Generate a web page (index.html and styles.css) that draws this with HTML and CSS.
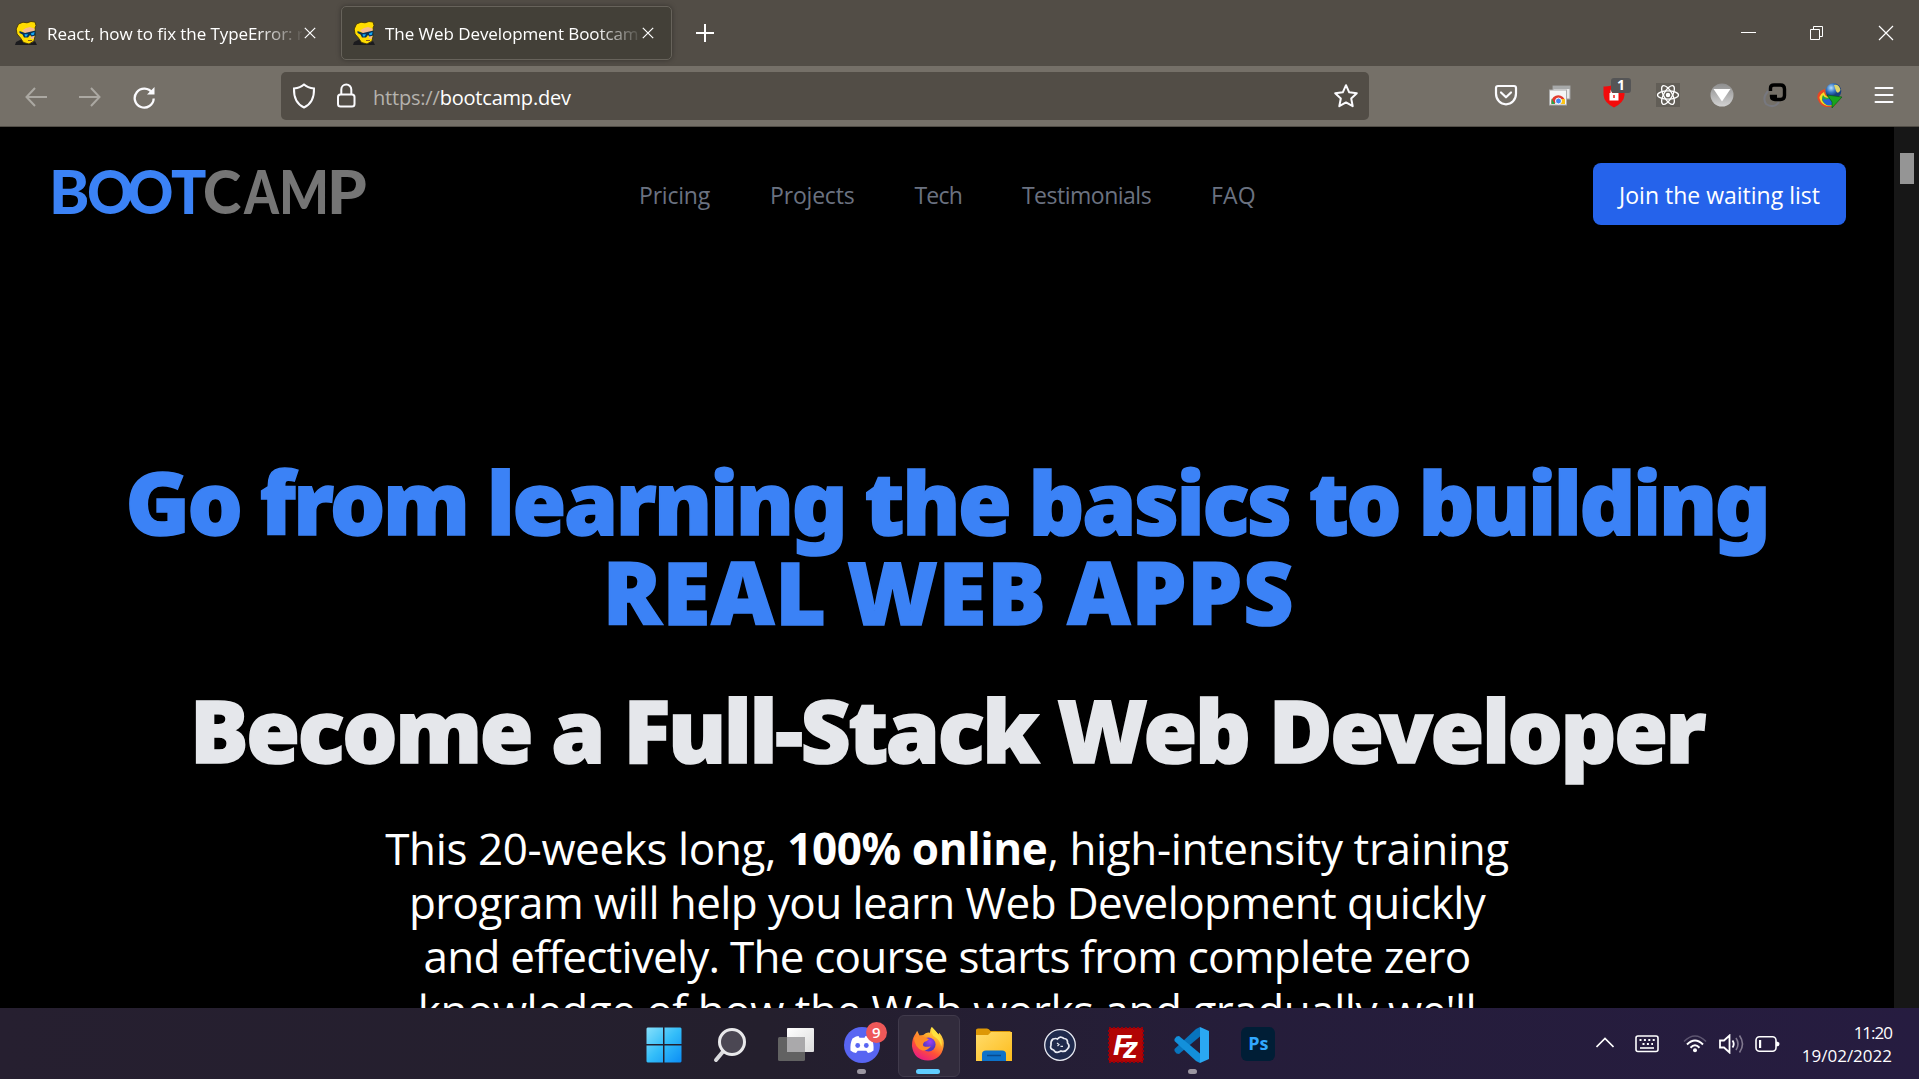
FILE: index.html
```html
<!DOCTYPE html>
<html lang="en">
<head>
<meta charset="utf-8">
<title>The Web Development Bootcamp</title>
<link rel="stylesheet" href="styles.css">
</head>
<body>
<svg class="defs" width="0" height="0" aria-hidden="true">
  <defs>
    <symbol id="avatar" viewBox="0 0 22 24">
      <path d="M0 24 1 21 6 18.500 9 21 17 22 20 20 22 24Z" fill="#1b1b1e"/>
      <path d="M2 13 1.200 8 3.500 3 8 1.200 12 1.800 16 .5 20 1 21 4.500 20 7 20.500 13 19 20 14 23 8.500 21.500 5.500 17Z" fill="#ffdc00" stroke="#42350a" stroke-width=".9"/>
      <path d="M7 9.500 11 7 15 6 19.500 7.500 19.500 10 10 12.500Z" fill="#f5b98f"/>
      <path d="M16 14 19.500 14.500 18.500 18 15.500 17.500Z" fill="#f5b98f"/>
      <path d="M4.500 10 10 12 20.500 9.500 20.500 14.500 16.500 15.500 15 14 13 16.500 9 16.500 7.500 13.500 4.500 12Z" fill="#06315a"/>
      <path d="M9.500 13.200 13 13.300 11.700 15.500 10 15.500ZM16 12.300 19.500 11 19 13.700 16.500 14.300Z" fill="#13a9f5"/>
      <path d="M13 19.500H17" stroke="#7a4b22" stroke-width=".9"/>
    </symbol>
    <symbol id="cross" viewBox="0 0 12 12"><path d="M.8.8 11.200 11.200M11.200.8.8 11.200" stroke="currentColor" stroke-width="1.200" fill="none"/></symbol>
    <linearGradient id="win" x1="0" y1="0" x2="1" y2="1"><stop offset="0" stop-color="#86e0fb"/><stop offset=".5" stop-color="#33bdf9"/><stop offset="1" stop-color="#0b8df5"/></linearGradient>
    <linearGradient id="glass" x1="0" y1="0" x2="1" y2="1"><stop offset="0" stop-color="#fff"/><stop offset="1" stop-color="#dcdcdc"/></linearGradient>
    <linearGradient id="fold" x1="0" y1="0" x2="1" y2="1"><stop offset="0" stop-color="#ffdc6b"/><stop offset="1" stop-color="#fdbc1c"/></linearGradient>
    <linearGradient id="flame" x1=".8" y1="0" x2=".25" y2="1"><stop offset="0" stop-color="#fff44f"/><stop offset=".35" stop-color="#ffa62b"/><stop offset=".65" stop-color="#ff5037"/><stop offset="1" stop-color="#e6178a"/></linearGradient>
    <radialGradient id="globe" cx=".6" cy=".3"><stop offset="0" stop-color="#a03ff5"/><stop offset="1" stop-color="#5136c4"/></radialGradient>
    <radialGradient id="ball" cx=".35" cy=".3"><stop offset="0" stop-color="#b9e2ff"/><stop offset=".6" stop-color="#3274c4"/><stop offset="1" stop-color="#17407e"/></radialGradient>
    <linearGradient id="chrome" x1="0" y1="0" x2="0" y2="1"><stop offset="0" stop-color="#8e8e8e"/><stop offset="1" stop-color="#d2d2d2"/></linearGradient>
  </defs>
</svg>

<header class="titlebar">
  <div class="tabs">
    <div class="tab">
      <svg class="favicon"><use href="#avatar"/></svg>
      <span class="tab-title">React, how to fix the TypeError: n</span>
      <svg class="tab-close"><use href="#cross"/></svg>
    </div>
    <div class="tab active">
      <svg class="favicon"><use href="#avatar"/></svg>
      <span class="tab-title">The Web Development Bootcamp</span>
      <svg class="tab-close"><use href="#cross"/></svg>
    </div>
    <svg class="new-tab" viewBox="0 0 18 18"><path d="M9 0V18M0 9H18" stroke="#fff" stroke-width="2"/></svg>
  </div>
  <div class="window-buttons">
    <svg width="16" height="16" viewBox="0 0 16 16"><path d="M1 7.500H16" stroke="#fff"/></svg>
    <svg width="16" height="16" viewBox="0 0 16 16" fill="none" stroke="#fff"><path d="M1.500 4.500H10.500V14.500H1.500ZM4.500 4.500V1.500H13.500V11.500H10.500"/></svg>
    <svg width="16" height="16" viewBox="0 0 16 16"><path d="M1 1 15 15M15 1 1 15" stroke="#fff" stroke-width="1.200"/></svg>
  </div>
</header>

<div class="toolbar">
  <div class="nav-buttons">
    <svg class="dim" width="22" height="22" viewBox="0 0 22 22"><path d="M22 11H1.500M10 2 1.500 11 10 20"/></svg>
    <svg class="dim" width="22" height="22" viewBox="0 0 22 22"><path d="M0 11H20.500M12 2 20.500 11 12 20"/></svg>
    <svg width="24" height="24" viewBox="0 0 24 24"><path d="M19.200 8A9.500 9.500 0 1 0 20.700 13.500" stroke-width="2.300"/><path d="M21.500 2V9.500H14Z" fill="#fbfbfe" stroke="none"/></svg>
  </div>
  <div class="urlbar">
    <svg width="24" height="26" viewBox="0 0 24 26"><path d="M12 1.500C14.500 3.800 18 5 22 5.500 22.300 14 19.500 21 12 24.500 4.500 21 1.700 14 2 5.500 6 5 9.500 3.800 12 1.500Z"/></svg>
    <svg width="20" height="26" viewBox="0 0 20 26"><rect x="1" y="11.500" width="16.500" height="12" rx="2.500"/><path d="M4.300 11V6.500A5 5 0 0 1 14.300 6.500V11"/></svg>
    <span class="url"><span class="scheme">https://</span>bootcamp.dev</span>
    <svg width="26" height="26" viewBox="0 0 26 26"><path d="M13 2.200 16.200 9.300 23.800 10.200 18.200 15.500 19.700 23.200 13 19.400 6.300 23.200 7.800 15.500 2.200 10.200 9.800 9.300Z" stroke-linejoin="round"/></svg>
  </div>
  <div class="extensions">
    <svg viewBox="0 0 28 28" fill="none" stroke="#fbfbfe" stroke-width="2.200" stroke-linecap="round" stroke-linejoin="round"><path d="M6 5H22A2 2 0 0 1 24 7V12.500C24 19 19.500 23.300 14 23.300S4 19 4 12.500V7A2 2 0 0 1 6 5ZM9 11.500 14 16.300 19 11.500"/></svg>
    <svg viewBox="0 0 28 28"><rect x="7" y="5" width="17" height="13" fill="#e8e8e8" stroke="#9f9f9f"/><path d="M7 5H24V8H7Z" fill="#a7a9a9"/><rect x="3.500" y="9" width="17" height="15" fill="#f5f5f5" stroke="#aaa"/><path d="M5.500 23A7 7 0 0 1 18.500 18H12.500L8.500 23Z" fill="#e23b2e"/><path d="M5.500 17.500 9 23H5.500Z" fill="#27a84a"/><path d="M15 18H19V23H14Z" fill="#fbc417"/><circle cx="12.500" cy="20" r="3" fill="#4485f4" stroke="#fff"/></svg>
    <span class="ext-badge">
      <svg viewBox="0 0 28 28"><path d="M14 3.500Q19 6 24.500 5.500V14Q24 21.500 14 26.500 4 21.500 3.500 14V5.500Q9 6 14 3.500Z" fill="#f30b0b"/><rect x="9.500" y="12" width="9" height="7.500" fill="#fff"/><path d="M11.300 12V10.500A2.700 2.700 0 0 1 16.700 10.500V12" fill="none" stroke="#fff" stroke-width="1.600"/><path d="M14 14V17" stroke="#f30b0b" stroke-width="1.400"/></svg>
      <b>1</b>
    </span>
    <svg viewBox="0 0 28 28" fill="none" stroke="#fff" stroke-width="1.300"><path d="M2 2H26V26H2Z" fill="#625e57" stroke="none"/><ellipse cx="14" cy="14" rx="10.500" ry="4.200"/><ellipse cx="14" cy="14" rx="10.500" ry="4.200" transform="rotate(60 14 14)"/><ellipse cx="14" cy="14" rx="10.500" ry="4.200" transform="rotate(120 14 14)"/><circle cx="14" cy="14" r="1.600" fill="#fff"/></svg>
    <svg viewBox="0 0 28 28"><circle cx="14" cy="14" r="11.500" fill="url(#chrome)"/><path d="M5.500 8H22.500L14 20.500Z" fill="#fff"/></svg>
    <svg viewBox="0 0 28 28" fill="none"><path d="M6 10Q0 17 4 23 12 28 17 21" stroke="#77787f" stroke-width="2"/><path d="M8.500 10V7Q8.500 4 12 4H18.500Q22.500 4 22.500 8V14.500Q22.500 18.500 18.500 18.500H13Q9.500 18.500 9.500 15.500H15" stroke="#000" stroke-width="3.400"/></svg>
    <svg viewBox="0 0 28 28"><path d="M9 8Q-1 11 2 19 5 27 14 26L20 24 15 15Q9 17 9 8Z" fill="#e84724"/><path d="M8 11Q1 15 5 21 10 27 18 24L15 16Q9 17 8 11Z" fill="#f5dc26"/><path d="M7 14Q4 19 9 23 14 26 19 23L14 16Q9 18 7 14Z" fill="#25a446"/><path d="M7 17Q6 21 11 24 15 25 19 22L14 17Q9 20 7 17Z" fill="#2360d5"/><circle cx="17.500" cy="10" r="7.800" fill="url(#ball)"/><path d="M18 4Q23 3 24.500 9 22 14 20 10Z" fill="#ded56a"/><path d="M11 14 26 16 16 27 16 21Z" fill="#18a51d" stroke="#0a5010" stroke-width=".6"/></svg>
    <svg viewBox="0 0 28 28" stroke="#fbfbfe" stroke-width="2" stroke-linecap="round"><path d="M5.500 7H22.500M5.500 14H22.500M5.500 21H22.500"/></svg>
  </div>
</div>

<main class="viewport">
  <div class="page">
    <div class="site-header">
      <svg class="logo" width="320" height="56" viewBox="0 0 320 56">
        <g class="logo-blue"><text x="0" y="50" textLength="40.400" lengthAdjust="spacingAndGlyphs">B</text><text x="38" y="50" textLength="46.500" lengthAdjust="spacingAndGlyphs">O</text><text x="78" y="50" textLength="46.500" lengthAdjust="spacingAndGlyphs">O</text><text x="122" y="50" textLength="35.400" lengthAdjust="spacingAndGlyphs">T</text></g>
        <g class="logo-gray"><text x="154" y="50" textLength="38.200" lengthAdjust="spacingAndGlyphs">C</text><text x="195" y="50" textLength="35" lengthAdjust="spacingAndGlyphs">A</text><text x="230" y="50" textLength="50" lengthAdjust="spacingAndGlyphs">M</text><text x="278" y="50" textLength="39.800" lengthAdjust="spacingAndGlyphs">P</text></g>
      </svg>
      <nav class="menu">
        <a>Pricing</a><a class="projects">Projects</a><a class="tech">Tech</a><a class="testimonials">Testimonials</a><a class="faq">FAQ</a>
      </nav>
      <a class="cta">Join the waiting list</a>
    </div>
    <section class="hero">
      <h1><span class="l1">Go from learning the basics to building</span><span class="l2">REAL WEB APPS</span></h1>
      <h2>Become a Full-Stack Web Developer</h2>
      <p>
        <span class="p1">This 20-weeks long, <strong>100% online</strong>, high-intensity training</span>
        <span class="p2">program will help you learn Web Development quickly</span>
        <span class="p3">and effectively. The course starts from complete zero</span>
        <span class="p4">knowledge of how the Web works and gradually we'll</span>
      </p>
    </section>
  </div>
  <div class="scrollbar"><div class="thumb"></div></div>
</main>

<footer class="taskbar">
  <div class="apps">
    <div class="app"><svg viewBox="0 0 36 36"><path d="M1.500.5H17V17H.5V1.500ZM18.500.5H34.500L35.500 1.500V17H18.500ZM.5 18.500H17V35.500H1.500L.5 34.500ZM18.500 18.500H35.500V34.500L34.500 35.500H18.500Z" fill="url(#win)"/></svg></div>
    <div class="app"><svg viewBox="0 0 36 36"><path d="M11.500 24 4 33" stroke="#d9d9dc" stroke-width="4" stroke-linecap="round"/><circle cx="20" cy="15" r="12.500" fill="#4b4753" stroke="#e9e9eb" stroke-width="3"/></svg></div>
    <div class="app"><svg viewBox="0 0 36 36"><rect y="10" width="27" height="24" rx="1.500" fill="#626262"/><rect x="9" y="1" width="27" height="24" rx="1" fill="url(#glass)"/><path d="M9 10H27V25H9Z" fill="#aaa9ab"/></svg></div>
    <div class="app"><svg viewBox="0 0 36 36"><circle cx="18" cy="18" r="18" fill="#5865f2"/><path d="M12 9.500 14.500 9 15.500 10.700H20.500L21.500 9 24 9.500 27.500 11.500Q30 16 29.500 23.500 27 25.500 24 26L22.300 23.800H13.700L12 26Q9 25.500 6.500 23.500 6 16 8.500 11.500Z" fill="#fff"/><circle cx="13.700" cy="18.500" r="2.400" fill="#5865f2"/><circle cx="22.300" cy="18.500" r="2.400" fill="#5865f2"/></svg><span class="count">9</span><i class="dot"></i></div>
    <div class="app current"><svg viewBox="0 0 36 36"><path d="M22 0Q26 4 29 8L30 6Q36 13 34.500 21 32 35 18 35.500 3 35 1 20 1 12 5 7L6.500 4 9 9 13 8.500Q16 5 20 6 20 2 22 0Z" fill="url(#flame)"/><circle cx="18.500" cy="18.500" r="7.500" fill="url(#globe)"/><path d="M3 11Q9 8 13 10L19 13Q17 15 14 16 12 18 13 20 17 22 21 20 18 25 12 25 4 22 3 11Z" fill="#ff8a29"/><path d="M22 0Q26 4 29 8 34 14 32 21 31 14 26 11 20 8 22 0Z" fill="#ffe23f"/></svg><i class="dot wide"></i></div>
    <div class="app"><svg viewBox="0 0 36 36"><path d="M0 3Q0 1.500 2 1.500H11Q13 1.500 14.500 4H34L36 6V34H0Z" fill="#dd9806"/><path d="M0 8H12L15 5H36V34H0Z" fill="url(#fold)"/><path d="M6 34V27Q6 23.500 10 23.500H26Q30 23.500 30 27V34Z" fill="#0d72c9"/><path d="M11 28.500H25" stroke="#084a8c" stroke-width="1.500"/></svg></div>
    <div class="app"><svg viewBox="0 0 36 36" fill="none" stroke="#e8eaf2"><circle cx="18" cy="18" r="15.300" fill="#1f2a4d" stroke-width="1.300"/><path d="M11 12Q14 11 15.500 12 18 8.500 22 11.500 26 12 25.500 16 28.500 19 25.500 22 23 25.500 19 24 14 27 11.500 23 7.500 22 9 18 8.500 14 11 12Z" stroke-width="1.700"/><path d="M15 16 17 17.500 15.500 19M18.500 19.300H21" stroke-width="1.200"/></svg></div>
    <div class="app"><svg viewBox="0 0 36 36"><rect x="1" y="1" width="34" height="34" fill="#b10404" stroke="#98000b" stroke-width="2" stroke-dasharray="2 2"/><text class="fz" x="5" y="28" font-size="30">F</text><text class="fz" x="15" y="30.500" font-size="30">z</text></svg></div>
    <div class="app"><svg viewBox="0 0 36 36"><path d="M26 9.500 5 27 2.500 26.500.5 24V22L22 2 26 0Z" fill="#0874bd"/><path d="M26 26.500 5 9 2.500 9.500.5 12V14L22 34 26 36Z" fill="#1390db"/><path d="M26 0 35 4V32L26 36Z" fill="#2aa8f2"/></svg><i class="dot"></i></div>
    <div class="app"><span class="ps">Ps</span></div>
  </div>
  <div class="tray">
    <svg class="chev" width="18" height="12" viewBox="0 0 18 12"><path d="M.5 10 9 1.500 17.500 10"/></svg>
    <svg class="kbd" width="24" height="18" viewBox="0 0 24 18"><rect x="1" y="1" width="22" height="15.500" rx="2"/><path d="M4.500 5H20M7.500 9H18" stroke-dasharray="2 2.400" stroke-width="1.800"/><path d="M5 13H19"/></svg>
    <svg class="wifi" width="24" height="20" viewBox="0 0 24 20"><path d="M1 7.500Q12-3.500 23 7.500" stroke="#5d5570"/><path d="M4 10.500Q12 2.500 20 10.500M7.500 13.700Q12 9 16.500 13.700" stroke-width="2"/><circle cx="12" cy="16.300" r="2" fill="#fff" stroke="none"/></svg>
    <svg class="vol" width="25" height="20" viewBox="0 0 25 20"><path d="M1 6.500H5L10.500 1.500V18.500L5 13.500H1ZM13.500 6.500Q16 10 13.500 13.500" stroke-width="1.800"/><path d="M17 4Q21 10 17 16M20.500 1.500Q26.500 10 20.500 18.500" stroke="#81798f"/></svg>
    <svg class="bat" width="25" height="18" viewBox="0 0 25 18"><rect x="1" y="1.800" width="20" height="14.400" rx="3.500"/><path d="M4 5H6.200V13H4Z" fill="#fff" stroke="none"/><path d="M21 6.500Q24.500 6.500 24.500 9T21 11.500Z" fill="#fff" stroke="none"/></svg>
    <div class="clock"><span class="time">11:20</span><span>19/02/2022</span></div>
  </div>
</footer>
</body>
</html>
```
FILE: styles.css
```css
* { box-sizing: border-box; }
body {
  margin: 0;
  width: 1919px;
  height: 1079px;
  overflow: hidden;
  display: flex;
  flex-direction: column;
  background: #000;
  font-family: "Open Sans", "Noto Sans", sans-serif;
  color: #fff;
}
svg { display: block; flex: none; }
.defs { position: absolute; }

/* Browser chrome */
.titlebar {
  height: 66px;
  flex: none;
  display: flex;
  justify-content: space-between;
  background: #524d46;
}
.tabs { display: flex; align-items: center; padding-left: 3px; }
.tab {
  width: 331px;
  height: 54px;
  margin-right: 7px;
  padding-left: 11px;
  display: flex;
  align-items: center;
  border: 1px solid transparent;
  border-radius: 5px;
}
.tab.active {
  background: #434038;
  border-color: #67635b;
  box-shadow: 0 0 5px rgba(0, 0, 0, .35);
}
.favicon { width: 22px; height: 24px; }
.tab-title {
  width: 255px;
  margin-left: 10px;
  overflow: hidden;
  white-space: nowrap;
  font-size: 17px;
  letter-spacing: -.08px;
  -webkit-mask-image: linear-gradient(to right, #000 210px, transparent 258px);
  mask-image: linear-gradient(to right, #000 210px, transparent 258px);
}
.tab-close { width: 12px; height: 12px; margin-left: 2px; color: #fff; }
.new-tab { width: 18px; height: 18px; margin-left: 17px; }
.window-buttons { display: flex; align-items: center; gap: 53px; padding-right: 25px; color: #fff; }

.toolbar {
  height: 61px;
  flex: none;
  display: flex;
  align-items: center;
  background: #757068;
  border-bottom: 1px solid #514d46;
}
.nav-buttons { width: 281px; padding-left: 25px; display: flex; align-items: center; gap: 32px; padding-top: 2px; }
.nav-buttons svg, .urlbar svg { fill: none; stroke: #fbfbfe; stroke-width: 2; }
.nav-buttons .dim { stroke: #aba8a2; }
.urlbar {
  width: 1088px;
  height: 48px;
  padding: 0 10px 0 11px;
  display: flex;
  align-items: center;
  background: #524d46;
  border-radius: 5px;
}
.urlbar svg:nth-child(2) { margin-left: 21px; }
.url { flex: 1; margin-left: 16px; font-size: 20px; letter-spacing: -.2px; line-height: 30px; padding-top: 3px; }
.scheme { color: #b5b2ad; }
.extensions { margin: 0 0 2px 123px; display: flex; gap: 26px; }
.extensions svg { width: 28px; height: 28px; }
.ext-badge { position: relative; }
.ext-badge b {
  position: absolute;
  left: 11px;
  top: -3px;
  width: 20px;
  height: 15px;
  border-radius: 3px;
  background: #555556;
  font-size: 14px;
  line-height: 14px;
  text-align: center;
}

/* Site */
.viewport { height: 881px; flex: none; display: flex; overflow: hidden; }
.page { width: 1894px; height: 881px; overflow: hidden; }
.scrollbar { width: 25px; padding: 26px 5px 0 6px; background: #171717; }
.thumb { height: 31px; background: #959595; }
.site-header { height: 134px; padding: 0 48px 0 49px; display: flex; align-items: center; }
.logo { overflow: visible; margin-bottom: 5px; font-family: Lato, sans-serif; font-weight: 900; font-size: 61px; }
.logo-blue { fill: #3b82f6; }
.logo-gray { fill: #757575; }
.menu {
  margin: 1px 0 0 270px;
  display: flex;
  gap: 60px;
  color: #6b7280;
  font-size: 23px;
  line-height: 32px;
}
.menu a { white-space: nowrap; }
.menu a:first-child { letter-spacing: -.2px; }
.projects { letter-spacing: -.2px; }
.tech { letter-spacing: -.8px; }
.testimonials { letter-spacing: -.5px; }
.faq { letter-spacing: .1px; }
.cta {
  width: 253px;
  height: 62px;
  margin-left: auto;
  border-radius: 8px;
  background: #2563eb;
  font-size: 23px;
  line-height: 64px;
  text-align: center;
}
.hero { padding-top: 195px; text-align: center; white-space: nowrap; }
.hero span { display: block; }
h1, h2 {
  margin: 0;
  font-family: "Noto Sans", sans-serif;
  font-weight: 900;
  font-size: 87px;
  line-height: 90px;
  -webkit-text-stroke: 1.6px currentColor;
}
h1 { color: #3b82f6; }
.l1 { letter-spacing: -2.4px; word-spacing: -1px; }
.l2 { letter-spacing: .9px; word-spacing: -3px; padding-left: 3px; }
h2 { margin-top: 48px; color: #e5e7eb; letter-spacing: -2.4px; }
.hero p { margin: 47px 0 0; font-size: 44px; line-height: 54px; }
.p1 { letter-spacing: -.38px; }
.p2 { letter-spacing: -.6px; }
.p3 { letter-spacing: -.77px; }
.p4 { letter-spacing: -.48px; }

/* Taskbar */
.taskbar {
  position: relative;
  height: 71px;
  flex: none;
  display: flex;
  justify-content: space-between;
  background: linear-gradient(90deg, #261f30 0%, #241f2d 40%, #251d3a 65%, #261c40 100%);
}
.apps { display: flex; padding-left: 630.5px; }
.app { position: relative; width: 66.1px; height: 71px; display: flex; justify-content: center; padding-top: 19px; }
.app svg { width: 36px; height: 36px; }
.current::before {
  content: "";
  position: absolute;
  left: 3px;
  top: 7px;
  width: 60px;
  height: 60px;
  border: 1px solid #403a4b;
  border-radius: 6px;
  background: #312b3c;
}
.current svg { position: relative; width: 34px; height: 34px; }
.dot {
  position: absolute;
  bottom: 5px;
  left: 50%;
  width: 9px;
  height: 5px;
  margin-left: -4.5px;
  border-radius: 3px;
  background: #9b96a1;
}
.dot.wide { width: 24px; margin-left: -12px; background: #60cdff; }
.count {
  position: absolute;
  left: 37px;
  top: 14px;
  width: 21px;
  height: 21px;
  border-radius: 50%;
  background: #ee5858;
  font-size: 15px;
  font-weight: 600;
  line-height: 21px;
  text-align: center;
}
.fz { font-family: "Liberation Sans", sans-serif; font-weight: 700; font-style: italic; fill: #fff; }
.ps {
  width: 34px;
  height: 34px;
  border-radius: 6px;
  background: #001e36;
  color: #31a8ff;
  font-size: 18px;
  font-weight: 700;
  line-height: 32px;
  text-align: center;
}
.tray { display: flex; padding-right: 27px; }
.tray svg { fill: none; stroke: #fff; stroke-width: 1.6; }
.tray .chev { margin: 29px 21px 0 0; }
.tray .kbd { margin: 27px 24px 0 0; }
.tray .wifi { margin: 26px 12px 0 0; }
.tray .vol { margin: 26px 11px 0 0; }
.tray .bat { margin: 27px 22px 0 0; }
.clock { display: flex; flex-direction: column; align-items: flex-end; padding-top: 13px; font-size: 17px; line-height: 23px; }
.time { letter-spacing: -1px; }
```
